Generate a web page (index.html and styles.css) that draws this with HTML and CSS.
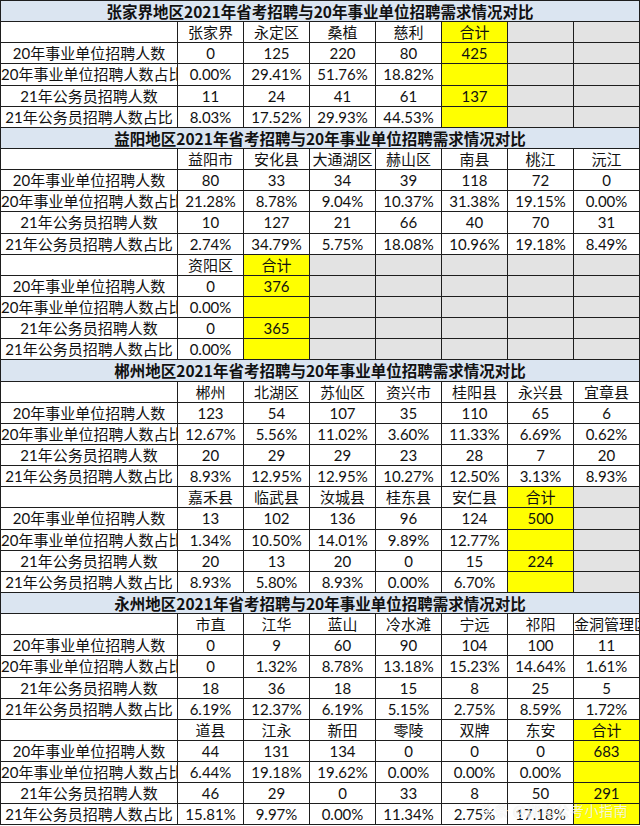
FILE: index.html
```html
<!DOCTYPE html>
<html lang="zh">
<head>
<meta charset="utf-8">
<title>2021年省考招聘与20年事业单位招聘需求情况对比</title>
<link rel="stylesheet" href="styles.css">
</head>
<body>
<div class="page">
<div class="sheet">
  <div class="c t">张家界地区2021年省考招聘与20年事业单位招聘需求情况对比</div>
  <div class="c l"></div><div class="c">张家界</div><div class="c">永定区</div><div class="c">桑植</div><div class="c">慈利</div><div class="c y">合计</div><div class="c g"></div><div class="c g"></div>
  <div class="c l">20年事业单位招聘人数</div><div class="c">0</div><div class="c">125</div><div class="c">220</div><div class="c">80</div><div class="c y">425</div><div class="c g"></div><div class="c g"></div>
  <div class="c l">20年事业单位招聘人数占比</div><div class="c">0.00%</div><div class="c">29.41%</div><div class="c">51.76%</div><div class="c">18.82%</div><div class="c y"></div><div class="c g"></div><div class="c g"></div>
  <div class="c l">21年公务员招聘人数</div><div class="c">11</div><div class="c">24</div><div class="c">41</div><div class="c">61</div><div class="c y">137</div><div class="c g"></div><div class="c g"></div>
  <div class="c l">21年公务员招聘人数占比</div><div class="c">8.03%</div><div class="c">17.52%</div><div class="c">29.93%</div><div class="c">44.53%</div><div class="c y"></div><div class="c g"></div><div class="c g"></div>

  <div class="c t">益阳地区2021年省考招聘与20年事业单位招聘需求情况对比</div>
  <div class="c l"></div><div class="c">益阳市</div><div class="c">安化县</div><div class="c">大通湖区</div><div class="c">赫山区</div><div class="c">南县</div><div class="c">桃江</div><div class="c">沅江</div>
  <div class="c l">20年事业单位招聘人数</div><div class="c">80</div><div class="c">33</div><div class="c">34</div><div class="c">39</div><div class="c">118</div><div class="c">72</div><div class="c">0</div>
  <div class="c l">20年事业单位招聘人数占比</div><div class="c">21.28%</div><div class="c">8.78%</div><div class="c">9.04%</div><div class="c">10.37%</div><div class="c">31.38%</div><div class="c">19.15%</div><div class="c">0.00%</div>
  <div class="c l">21年公务员招聘人数</div><div class="c">10</div><div class="c">127</div><div class="c">21</div><div class="c">66</div><div class="c">40</div><div class="c">70</div><div class="c">31</div>
  <div class="c l">21年公务员招聘人数占比</div><div class="c">2.74%</div><div class="c">34.79%</div><div class="c">5.75%</div><div class="c">18.08%</div><div class="c">10.96%</div><div class="c">19.18%</div><div class="c">8.49%</div>
  <div class="c l"></div><div class="c">资阳区</div><div class="c y">合计</div><div class="c g"></div><div class="c g"></div><div class="c g"></div><div class="c g"></div><div class="c g"></div>
  <div class="c l">20年事业单位招聘人数</div><div class="c">0</div><div class="c y">376</div><div class="c g"></div><div class="c g"></div><div class="c g"></div><div class="c g"></div><div class="c g"></div>
  <div class="c l">20年事业单位招聘人数占比</div><div class="c">0.00%</div><div class="c y"></div><div class="c g"></div><div class="c g"></div><div class="c g"></div><div class="c g"></div><div class="c g"></div>
  <div class="c l">21年公务员招聘人数</div><div class="c">0</div><div class="c y">365</div><div class="c g"></div><div class="c g"></div><div class="c g"></div><div class="c g"></div><div class="c g"></div>
  <div class="c l">21年公务员招聘人数占比</div><div class="c">0.00%</div><div class="c y"></div><div class="c g"></div><div class="c g"></div><div class="c g"></div><div class="c g"></div><div class="c g"></div>

  <div class="c t">郴州地区2021年省考招聘与20年事业单位招聘需求情况对比</div>
  <div class="c l"></div><div class="c">郴州</div><div class="c">北湖区</div><div class="c">苏仙区</div><div class="c">资兴市</div><div class="c">桂阳县</div><div class="c">永兴县</div><div class="c">宜章县</div>
  <div class="c l">20年事业单位招聘人数</div><div class="c">123</div><div class="c">54</div><div class="c">107</div><div class="c">35</div><div class="c">110</div><div class="c">65</div><div class="c">6</div>
  <div class="c l">20年事业单位招聘人数占比</div><div class="c">12.67%</div><div class="c">5.56%</div><div class="c">11.02%</div><div class="c">3.60%</div><div class="c">11.33%</div><div class="c">6.69%</div><div class="c">0.62%</div>
  <div class="c l">21年公务员招聘人数</div><div class="c">20</div><div class="c">29</div><div class="c">29</div><div class="c">23</div><div class="c">28</div><div class="c">7</div><div class="c">20</div>
  <div class="c l">21年公务员招聘人数占比</div><div class="c">8.93%</div><div class="c">12.95%</div><div class="c">12.95%</div><div class="c">10.27%</div><div class="c">12.50%</div><div class="c">3.13%</div><div class="c">8.93%</div>
  <div class="c l"></div><div class="c">嘉禾县</div><div class="c">临武县</div><div class="c">汝城县</div><div class="c">桂东县</div><div class="c">安仁县</div><div class="c y">合计</div><div class="c g"></div>
  <div class="c l">20年事业单位招聘人数</div><div class="c">13</div><div class="c">102</div><div class="c">136</div><div class="c">96</div><div class="c">124</div><div class="c y">500</div><div class="c g"></div>
  <div class="c l">20年事业单位招聘人数占比</div><div class="c">1.34%</div><div class="c">10.50%</div><div class="c">14.01%</div><div class="c">9.89%</div><div class="c">12.77%</div><div class="c y"></div><div class="c g"></div>
  <div class="c l">21年公务员招聘人数</div><div class="c">20</div><div class="c">13</div><div class="c">20</div><div class="c">0</div><div class="c">15</div><div class="c y">224</div><div class="c g"></div>
  <div class="c l">21年公务员招聘人数占比</div><div class="c">8.93%</div><div class="c">5.80%</div><div class="c">8.93%</div><div class="c">0.00%</div><div class="c">6.70%</div><div class="c y"></div><div class="c g"></div>

  <div class="c t">永州地区2021年省考招聘与20年事业单位招聘需求情况对比</div>
  <div class="c l"></div><div class="c">市直</div><div class="c">江华</div><div class="c">蓝山</div><div class="c">冷水滩</div><div class="c">宁远</div><div class="c">祁阳</div><div class="c">金洞管理区</div>
  <div class="c l">20年事业单位招聘人数</div><div class="c">0</div><div class="c">9</div><div class="c">60</div><div class="c">90</div><div class="c">104</div><div class="c">100</div><div class="c">11</div>
  <div class="c l">20年事业单位招聘人数占比</div><div class="c">0</div><div class="c">1.32%</div><div class="c">8.78%</div><div class="c">13.18%</div><div class="c">15.23%</div><div class="c">14.64%</div><div class="c">1.61%</div>
  <div class="c l">21年公务员招聘人数</div><div class="c">18</div><div class="c">36</div><div class="c">18</div><div class="c">15</div><div class="c">8</div><div class="c">25</div><div class="c">5</div>
  <div class="c l">21年公务员招聘人数占比</div><div class="c">6.19%</div><div class="c">12.37%</div><div class="c">6.19%</div><div class="c">5.15%</div><div class="c">2.75%</div><div class="c">8.59%</div><div class="c">1.72%</div>
  <div class="c l"></div><div class="c">道县</div><div class="c">江永</div><div class="c">新田</div><div class="c">零陵</div><div class="c">双牌</div><div class="c">东安</div><div class="c y">合计</div>
  <div class="c l">20年事业单位招聘人数</div><div class="c">44</div><div class="c">131</div><div class="c">134</div><div class="c">0</div><div class="c">0</div><div class="c">0</div><div class="c y">683</div>
  <div class="c l">20年事业单位招聘人数占比</div><div class="c">6.44%</div><div class="c">19.18%</div><div class="c">19.62%</div><div class="c">0.00%</div><div class="c">0.00%</div><div class="c">0.00%</div><div class="c y"></div>
  <div class="c l">21年公务员招聘人数</div><div class="c">46</div><div class="c">29</div><div class="c">0</div><div class="c">33</div><div class="c">8</div><div class="c">50</div><div class="c y">291</div>
  <div class="c l">21年公务员招聘人数占比</div><div class="c">15.81%</div><div class="c">9.97%</div><div class="c">0.00%</div><div class="c">11.34%</div><div class="c">2.75%</div><div class="c">17.18%</div><div class="c y"></div>
</div>
<div class="watermark">头条 @湖南公考小指南</div>
</div>
</body>
</html>
```

FILE: styles.css
```css
html, body {
  margin: 0;
  padding: 0;
  background: #ffffff;
}

.page {
  position: relative;
  width: 640px;
  height: 826px;
  overflow: hidden;
}

.sheet {
  display: grid;
  grid-template-columns: 177px repeat(7, 66px);
  grid-auto-rows: 21.15px;
  border-left: 1px solid #1e1e1e;
  border-top: 1px solid #1e1e1e;
  width: 639px;
  font-family: Lato, "Noto Sans CJK SC", sans-serif;
  font-size: 15px;
  color: #111111;
}

.c {
  border-right: 1px solid #1e1e1e;
  border-bottom: 1px solid #1e1e1e;
  text-align: center;
  white-space: nowrap;
  overflow: hidden;
  line-height: 20px;
  background: #ffffff;
}

.t {
  grid-column: 1 / -1;
  background: #dbe5f1;
  font-family: "Noto Sans CJK SC", sans-serif;
  font-weight: 700;
  font-size: 15.5px;
  line-height: 20px;
  overflow: visible;
  color: #111111;
}

.y {
  background: #ffff00;
}

.g {
  background: #e3e3e3;
}

.watermark {
  position: absolute;
  right: 12px;
  bottom: 6px;
  font-family: "Noto Sans CJK SC", sans-serif;
  font-size: 14px;
  color: rgba(255, 255, 255, 0.85);
  text-shadow: 0 0 1px rgba(0, 0, 0, 0.15);
  letter-spacing: 0.5px;
}
```
